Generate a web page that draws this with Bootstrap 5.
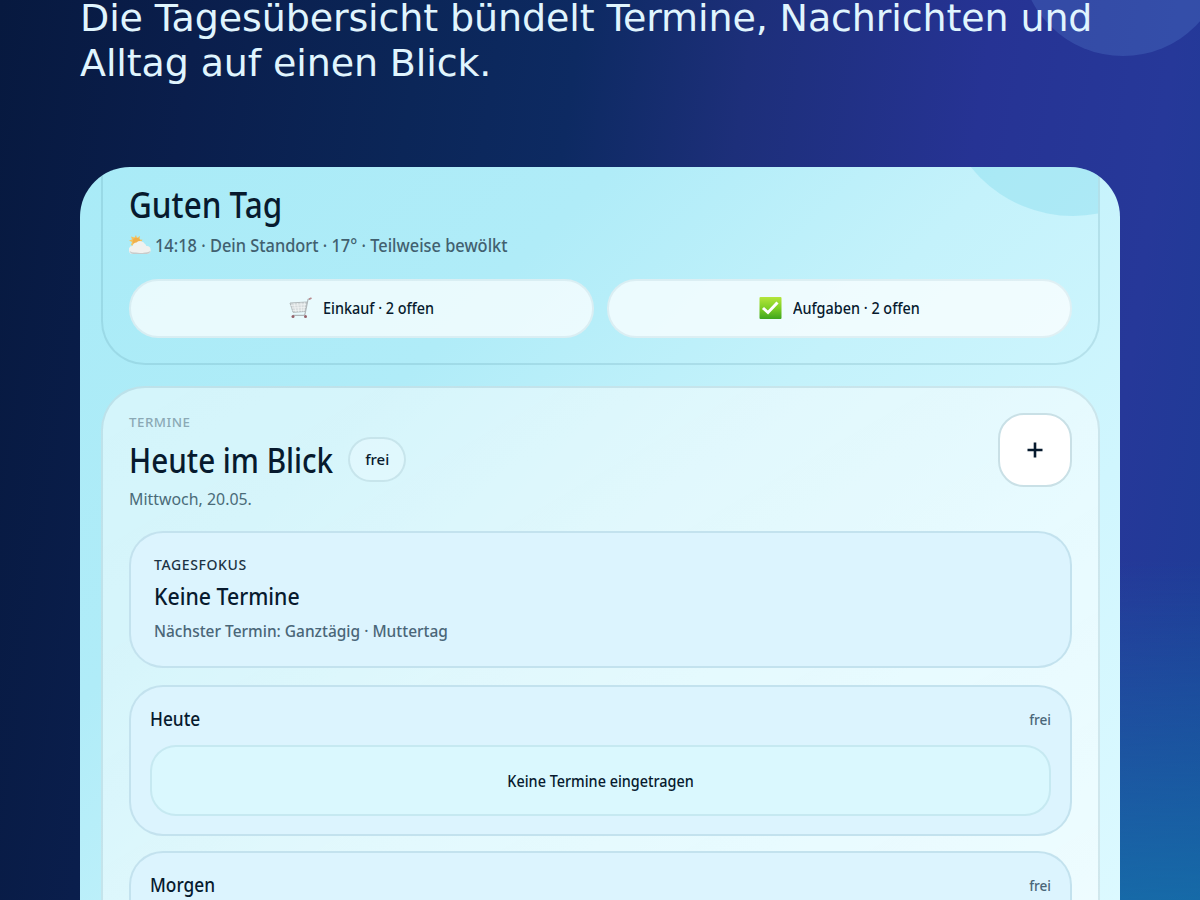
<!DOCTYPE html>
<html lang="de">
<head>
<meta charset="utf-8">
<meta name="viewport" content="width=device-width, initial-scale=1">
<title>Tagesübersicht</title>
<link href="https://cdn.jsdelivr.net/npm/bootstrap@5.3.0/dist/css/bootstrap.min.css" rel="stylesheet">
<style>
:root{--ink:#071a2e;--soft:#4a6678;--line:rgba(70,130,150,.17)}
html,body{height:900px;overflow:hidden}
body{font-family:"Noto Sans",sans-serif;font-weight:500;color:var(--ink);
 background:
 radial-gradient(ellipse 1100px 420px at 1170px 980px,rgba(20,118,172,.98),rgba(20,110,170,0)),
 linear-gradient(98deg,#07193f 0%,#0a1e4c 15%,#0b2658 32%,#0d2a62 44%,#1d2f7a 57%,#263394 75%,#263899 89%,#1d3c96 100%)}
.stage{padding:0 80px}
.lead-in{font:400 38px/45px "DejaVu Sans",sans-serif;letter-spacing:-.12px;color:#e0f5fe;height:167px;margin-top:-4px;white-space:nowrap}
.orb{position:absolute;width:206px;height:206px;border-radius:50%;left:1020px;top:-150px;background:rgba(130,190,255,.16)}
.phone{height:738px;border-radius:50px 50px 0 0;padding:0 20px 0 21px;overflow:hidden;background:linear-gradient(135deg,#a9ebf7 0%,#b0ecf8 30%,#c4f2fb 52%,#d0f6fe 75%,#dcf9ff 100%)}
.hero{height:198px;border:2px solid var(--line);border-width:0 2px 2px;border-radius:0 0 44px 44px;padding:15px 26px 0}
.hero-orb{position:absolute;width:262px;height:262px;border-radius:50%;right:-106px;top:-213px;background:rgba(125,215,235,.36)}
.hero h1{font-size:37px;line-height:44px;font-weight:500}
.meta{font-size:18px;line-height:24px;color:#41606f;margin-top:7px}
.pills{gap:13px;margin-top:22px}
.pill{height:59px;border-radius:29px;background:rgba(255,255,255,.73);border:2px solid rgba(70,130,150,.1);padding-bottom:1px;font-size:16px;gap:11px}
.agenda{margin-top:21px;height:600px;border:2px solid var(--line);border-radius:44px;padding:25px 26px;background:linear-gradient(150deg,rgba(255,255,255,.48),rgba(255,255,255,.52))}
.over{font-size:13.3px;letter-spacing:.5px;line-height:18px;color:#8ba9b5}
.agenda h2{font-size:34px;line-height:44px;font-weight:500}
.title-row{gap:15px;margin-top:6px}
.tag{width:58px;height:45px;border:2px solid var(--line);border-radius:23px;background:rgba(235,250,255,.45);font-size:15px;padding-bottom:1px}
.day{font-size:17px;line-height:24px;margin-top:5px;font-weight:400;color:#4a6b78}
.plus{width:74px;height:74px;border-radius:26px;border:2px solid #c9e0e6;background:#fff}
.panel{border:2px solid rgba(90,150,170,.19);border-radius:34px;background:#dcf4fe}
.focus-box{height:137px;margin-top:20px;padding:22px 23px}
.focus-box .cap{font-size:14px;letter-spacing:.6px;line-height:20px;color:#1c3344}
.focus-box .what{font-size:23px;line-height:30px;margin-top:6px}
.focus-box .next{font-size:17px;line-height:24px;margin-top:8px;color:var(--soft)}
.day-box{height:151px;padding:19px 19px;margin-top:15px}
.focus-box + .day-box{margin-top:17px}
.day-box .name{font-size:19px;line-height:26px}
.day-box .state{font-size:15px;line-height:22px;padding-bottom:1px;color:var(--soft);transform-origin:right}
.vacant{height:71px;margin-top:13px;border:2px solid rgba(90,150,170,.15);border-radius:26px;background:#daf8fe;font-size:16px}
/* condensed lettering */
.slim{display:inline-block;white-space:nowrap;transform:scaleX(.91);transform-origin:left}
.what .slim{transform:scaleX(.925)}
.slim-h1{transform:scaleX(.85)}
.slim-h2{transform:scaleX(.872);margin-right:-30px}
.slim-day{transform:scaleX(.935)}
.pill .slim{transform:scaleX(.9);margin-right:-13px}
.vacant .slim{transform:scaleX(.9);transform-origin:center}
</style>
</head>
<body>
<div class="orb"></div>
<main class="stage position-relative">
 <div class="lead-in"><span>Die Tagesübersicht bündelt Termine, Nachrichten und</span><br><span>Alltag auf einen Blick.</span></div>
 <div class="phone mt-1">
  <section class="hero position-relative overflow-hidden">
   <div class="hero-orb"></div>
   <h1 class="mb-0"><span class="slim slim-h1">Guten Tag</span></h1>
   <div class="meta d-flex align-items-center"><svg width="22" height="20" viewBox="0 0 22 20" class="me-1"><path d="M7 0l1 3 3-2-.5 3.500 3 .2-2 3L7 12 2 10l1-3-3-1.500 3-1-1-3 3.500 1z" fill="#f4c35e"/><circle cx="7.500" cy="6.500" r="3.700" fill="#f1b04a"/><path d="M4 19a4 4 0 0 1-.5-8 4.500 4.500 0 0 1 4-3.500 5.500 5.500 0 0 1 8.500 1.500q1 .7 1.300 2a4 4 0 0 1 .7 8z" fill="#f1f1ef"/><path d="M.5 16q1 3 4 3h13q3.200 0 4-3-2.500 1.700-5.500 1.400-5 1-9 .1-3.500.5-6.500-1.500z" fill="#c6cbcb"/></svg><span class="slim">14:18 · Dein Standort · 17° · Teilweise bewölkt</span></div>
   <div class="pills d-flex">
    <div class="pill flex-fill w-50 d-flex align-items-center justify-content-center"><svg width="23" height="22" viewBox="0 0 23 22"><path d="M1 6l17-1-2 9.500-12 .8z" fill="#d5dbdc" stroke="#b2babc"/><path d="M1.500 8.500l16-1M2.500 11l14.500-.5M3.500 13.500l13-.5M5 6l2 9M8.500 6l1.300 9M12 5.500l.5 9M15.500 5.500l-.8 9" stroke="#f4f6f6" stroke-width=".7"/><path d="M21.500 1.500l-2.500 1-3 14.500q-.3 1.300-1.500 1.300H4" fill="none" stroke="#b0b7ba" stroke-width="1.200"/><path d="M22.500 1l-2.500 1.200" stroke="#b98a8e" stroke-width="1.600"/><circle cx="4" cy="19.500" r="1.500" fill="#96616a"/><circle cx="16.500" cy="19.500" r="1.500" fill="#96616a"/></svg><span class="slim">Einkauf · 2 offen</span></div>
    <div class="pill flex-fill w-50 d-flex align-items-center justify-content-center"><svg width="23" height="22" viewBox="0 0 23 22"><defs><linearGradient id="g" x2="0" y2="1"><stop stop-color="#b4e53c"/><stop offset=".5" stop-color="#7fcf25"/><stop offset="1" stop-color="#3ea51d"/></linearGradient></defs><rect x=".5" width="22" height="22" rx="1" fill="url(#g)"/><path d="M4 11l5 4.500 9.500-10" fill="none" stroke="#fff" stroke-width="3"/></svg><span class="slim">Aufgaben · 2 offen</span></div>
   </div>
  </section>
  <section class="agenda">
   <div class="d-flex justify-content-between align-items-start">
    <div>
     <div class="over">TERMINE</div>
     <div class="title-row d-flex align-items-center"><h2 class="mb-0"><span class="slim slim-h2">Heute im Blick</span></h2><div class="tag d-flex align-items-center justify-content-center">frei</div></div>
     <div class="day"><span class="slim slim-day">Mittwoch, 20.05.</span></div>
    </div>
    <div class="plus d-flex align-items-center justify-content-center"><svg width="16" height="16" viewBox="0 0 16 16"><path d="M8 .5v15M.5 8h15" stroke="#071a2e" stroke-width="2.600"/></svg></div>
   </div>
   <div class="panel focus-box">
    <div class="cap">TAGESFOKUS</div>
    <div class="what"><span class="slim">Keine Termine</span></div>
    <div class="next"><span class="slim">Nächster Termin: Ganztägig · Muttertag</span></div>
   </div>
   <div class="panel day-box">
    <div class="d-flex justify-content-between align-items-center"><span class="name slim">Heute</span><span class="state slim">frei</span></div>
    <div class="vacant d-flex align-items-center justify-content-center"><span class="slim">Keine Termine eingetragen</span></div>
   </div>
   <div class="panel day-box">
    <div class="d-flex justify-content-between align-items-center"><span class="name slim">Morgen</span><span class="state slim">frei</span></div>
   </div>
  </section>
 </div>
</main>
<script src="https://cdn.jsdelivr.net/npm/bootstrap@5.3.0/dist/js/bootstrap.bundle.min.js"></script>
</body>
</html>
